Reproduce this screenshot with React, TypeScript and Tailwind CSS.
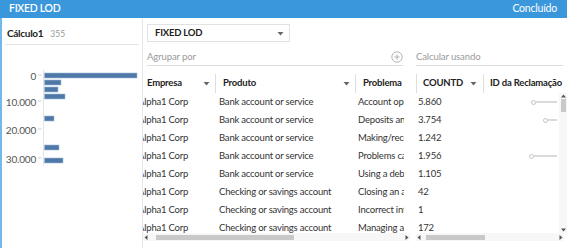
import { Fragment } from 'react';

const rows = [
  { empresa: 'Alpha1 Corp', produto: 'Bank account or service', problema: 'Account opening, closing, or management', count: '5.860', dot: 531 },
  { empresa: 'Alpha1 Corp', produto: 'Bank account or service', problema: 'Deposits and withdrawals', count: '3.754', dot: 543 },
  { empresa: 'Alpha1 Corp', produto: 'Bank account or service', problema: 'Making/receiving payments', count: '1.242', dot: 0 },
  { empresa: 'Alpha1 Corp', produto: 'Bank account or service', problema: 'Problems caused by my funds being low', count: '1.956', dot: 529 },
  { empresa: 'Alpha1 Corp', produto: 'Bank account or service', problema: 'Using a debit or ATM card', count: '1.105', dot: 0 },
  { empresa: 'Alpha1 Corp', produto: 'Checking or savings account', problema: 'Closing an account', count: '42', dot: 0 },
  { empresa: 'Alpha1 Corp', produto: 'Checking or savings account', problema: 'Incorrect information', count: '1', dot: 0 },
  { empresa: 'Alpha1 Corp', produto: 'Checking or savings account', problema: 'Managing an account', count: '172', dot: 0 },
];

// bars of the distribution chart: [top, right edge]
const bars = [
  [73, 137],
  [80, 61],
  [87, 58],
  [94, 65],
  [116, 54],
  [145, 59],
  [158, 63],
];

const axis = [
  { label: '0', y: 76 },
  { label: '10.000', y: 102 },
  { label: '20.000', y: 130 },
  { label: '30.000', y: 159 },
];

function Caret() {
  return (
    <svg width="7" height="5" viewBox="0 0 7 5" className="shrink-0">
      <path d="M0.5 1 L6.5 1 L3.5 4.5 Z" fill="#666" />
    </svg>
  );
}

function HScroll({ thumbLeft, thumbWidth }: { thumbLeft: number; thumbWidth: number }) {
  return (
    <div className="relative h-[8px] bg-[#f7f7f7] flex items-center justify-between px-[1px]">
      <svg width="4" height="5" viewBox="0 0 4 5">
        <path d="M3.5 0 L0.5 2.5 L3.5 5 Z" fill="#555" />
      </svg>
      <div className="absolute top-[1.5px] h-[5px] bg-[#c9c9c9]" style={{ left: thumbLeft, width: thumbWidth }} />
      <svg width="4" height="5" viewBox="0 0 4 5">
        <path d="M0.5 0 L3.5 2.5 L0.5 5 Z" fill="#555" />
      </svg>
    </div>
  );
}

export default function App() {
  return (
    <div className="w-[567px] h-[248px] overflow-hidden bg-white flex flex-col text-[#333]" style={{ fontFamily: 'Lato, "Open Sans", sans-serif' }}>
      {/* title bar */}
      <div className="h-[18px] shrink-0 bg-[#3b97dc] flex items-center justify-between pl-[9px] pr-[10px] text-white text-[10.5px]">
        <span className="font-semibold tracking-[-0.3px]">FIXED LOD</span>
        <span className="tracking-[-0.2px]">Concluído</span>
      </div>

      <div className="flex-1 flex border-l-2 border-[#72b9ea] min-h-0">
        {/* left panel: field summary */}
        <div className="w-[141px] shrink-0 border-r border-[#e6e6e6] relative">
          <div className="flex items-baseline gap-[7px] pl-[2px] pt-[8px] h-[27px] mx-[3px] border-b border-[#e3e3e3]">
            <span className="font-bold text-[10px] tracking-[-0.3px] text-[#222]">Cálculo1</span>
            <span className="text-[8.5px] text-[#999]">355</span>
          </div>
          <svg className="absolute left-[-2px] top-[-18px]" width="143" height="248">
            <line x1="43.5" y1="70" x2="43.5" y2="166" stroke="#e4e4e4" />
            {axis.map((a) => (
              <Fragment key={a.label}>
                <text x="36" y={a.y + 3.5} textAnchor="end" fontSize="10" letterSpacing="-0.2" fill="#555" fontFamily="Lato, sans-serif">
                  {a.label}
                </text>
                <line x1="38" y1={a.y - 1} x2="41.5" y2={a.y - 1} stroke="#d0d0d0" />
              </Fragment>
            ))}
            {bars.map(([y, r], i) => (
              <rect key={i} x="44.5" y={y} width={r - 44.5} height="5" fill="#4e78a8" stroke="#9fb9d6" strokeWidth="0.6" />
            ))}
          </svg>
        </div>

        {/* right panel */}
        <div className="flex-1 min-w-0 flex flex-col">
          <div className="pl-[4px] pt-[6px]">
            <div className="w-[143px] h-[18px] border border-[#e2e2e2] flex items-center justify-between pl-[7px] pr-[5px]">
              <span className="font-bold text-[9.5px] tracking-[-0.2px] text-[#222]">FIXED LOD</span>
              <Caret />
            </div>
          </div>

          <div className="flex pl-[4px] pr-[4px] mt-[7px] gap-[13px]">
            <div className="w-[256px] h-[17px] border-b border-[#dcdcdc] flex items-center justify-between">
              <span className="text-[9.5px] tracking-[-0.1px] text-[#999]">Agrupar por</span>
              <svg width="12" height="12" viewBox="0 0 12 12">
                <circle cx="6" cy="6" r="5.2" fill="none" stroke="#aaa" strokeWidth="0.9" />
                <path d="M6 3.3 V8.7 M3.3 6 H8.7" stroke="#aaa" strokeWidth="0.9" />
              </svg>
            </div>
            <div className="flex-1 h-[17px] border-b border-[#dcdcdc] flex items-center">
              <span className="text-[9.5px] tracking-[-0.1px] text-[#999]">Calcular usando</span>
            </div>
          </div>

          <div className="flex mt-[8px] gap-[6px] text-[9.5px] tracking-[-0.2px]">
            {/* left table */}
            <div className="w-[267px] flex flex-col overflow-hidden">
              <div className="flex h-[19px] font-bold text-[#222]">
                <div className="w-[73px] shrink-0 border-r border-[#dedede] flex items-center justify-between pl-[4px] pr-[5px]">
                  <span>Empresa</span>
                  <Caret />
                </div>
                <div className="w-[140px] shrink-0 border-r border-[#dedede] flex items-center justify-between pl-[7px] pr-[5px]">
                  <span>Produto</span>
                  <Caret />
                </div>
                <div className="flex-1 flex items-center pl-[7px] overflow-hidden whitespace-nowrap">
                  <span>Problema</span>
                </div>
              </div>
              <div className="h-[140px] overflow-hidden">
                {rows.map((r, i) => (
                  <div key={i} className="flex h-[18px] items-center whitespace-nowrap">
                    <div className="w-[73px] shrink-0 overflow-hidden">
                      <span className="block ml-[-5px]">{r.empresa}</span>
                    </div>
                    <div className="w-[140px] shrink-0 pl-[3px] overflow-hidden">{r.produto}</div>
                    <div className="w-[48px] shrink-0 pl-[2px] overflow-hidden">{r.problema}</div>
                  </div>
                ))}
              </div>
              <HScroll thumbLeft={13} thumbWidth={138} />
            </div>

            {/* right table */}
            <div className="flex-1 flex flex-col overflow-hidden">
              <div className="flex h-[19px] font-bold text-[#222] border-l border-[#dedede]">
                <div className="w-[67px] shrink-0 border-r border-[#dedede] flex items-center justify-between pl-[6px] pr-[6px]">
                  <span>COUNTD</span>
                  <Caret />
                </div>
                <div className="flex-1 flex items-center pl-[6px] whitespace-nowrap overflow-hidden">
                  <span>ID da Reclamação</span>
                </div>
              </div>
              <div className="h-[140px] flex">
                <div className="flex-1 overflow-hidden">
                  {rows.map((r, i) => (
                    <div key={i} className="relative flex h-[18px] items-center pl-[2px]">
                      <span>{r.count}</span>
                      {r.dot > 0 && (
                        <div className="absolute top-[8px] h-[2px] flex items-center" style={{ left: r.dot - 416 }}>
                          <span className="w-[5px] h-[5px] rounded-full border border-[#c4c4c4] bg-white shrink-0" />
                          <span className="h-[1.5px] bg-[#dadada]" style={{ width: 555 - r.dot - 3 }} />
                        </div>
                      )}
                    </div>
                  ))}
                </div>
                <div className="w-[8px] shrink-0 bg-[#f7f7f7] flex flex-col items-center justify-between py-[1px]">
                  <svg width="5" height="4" viewBox="0 0 5 4">
                    <path d="M0 3.5 L2.5 0.5 L5 3.5 Z" fill="#555" />
                  </svg>
                  <div className="w-[5px] h-[13px] bg-[#c9c9c9] mt-[1px]" />
                  <div className="flex-1" />
                  <svg width="5" height="4" viewBox="0 0 5 4">
                    <path d="M0 0.5 L2.5 3.5 L5 0.5 Z" fill="#555" />
                  </svg>
                </div>
              </div>
              <div className="mr-[3px]">
                <HScroll thumbLeft={10} thumbWidth={59} />
              </div>
            </div>
          </div>
        </div>
      </div>
    </div>
  );
}
